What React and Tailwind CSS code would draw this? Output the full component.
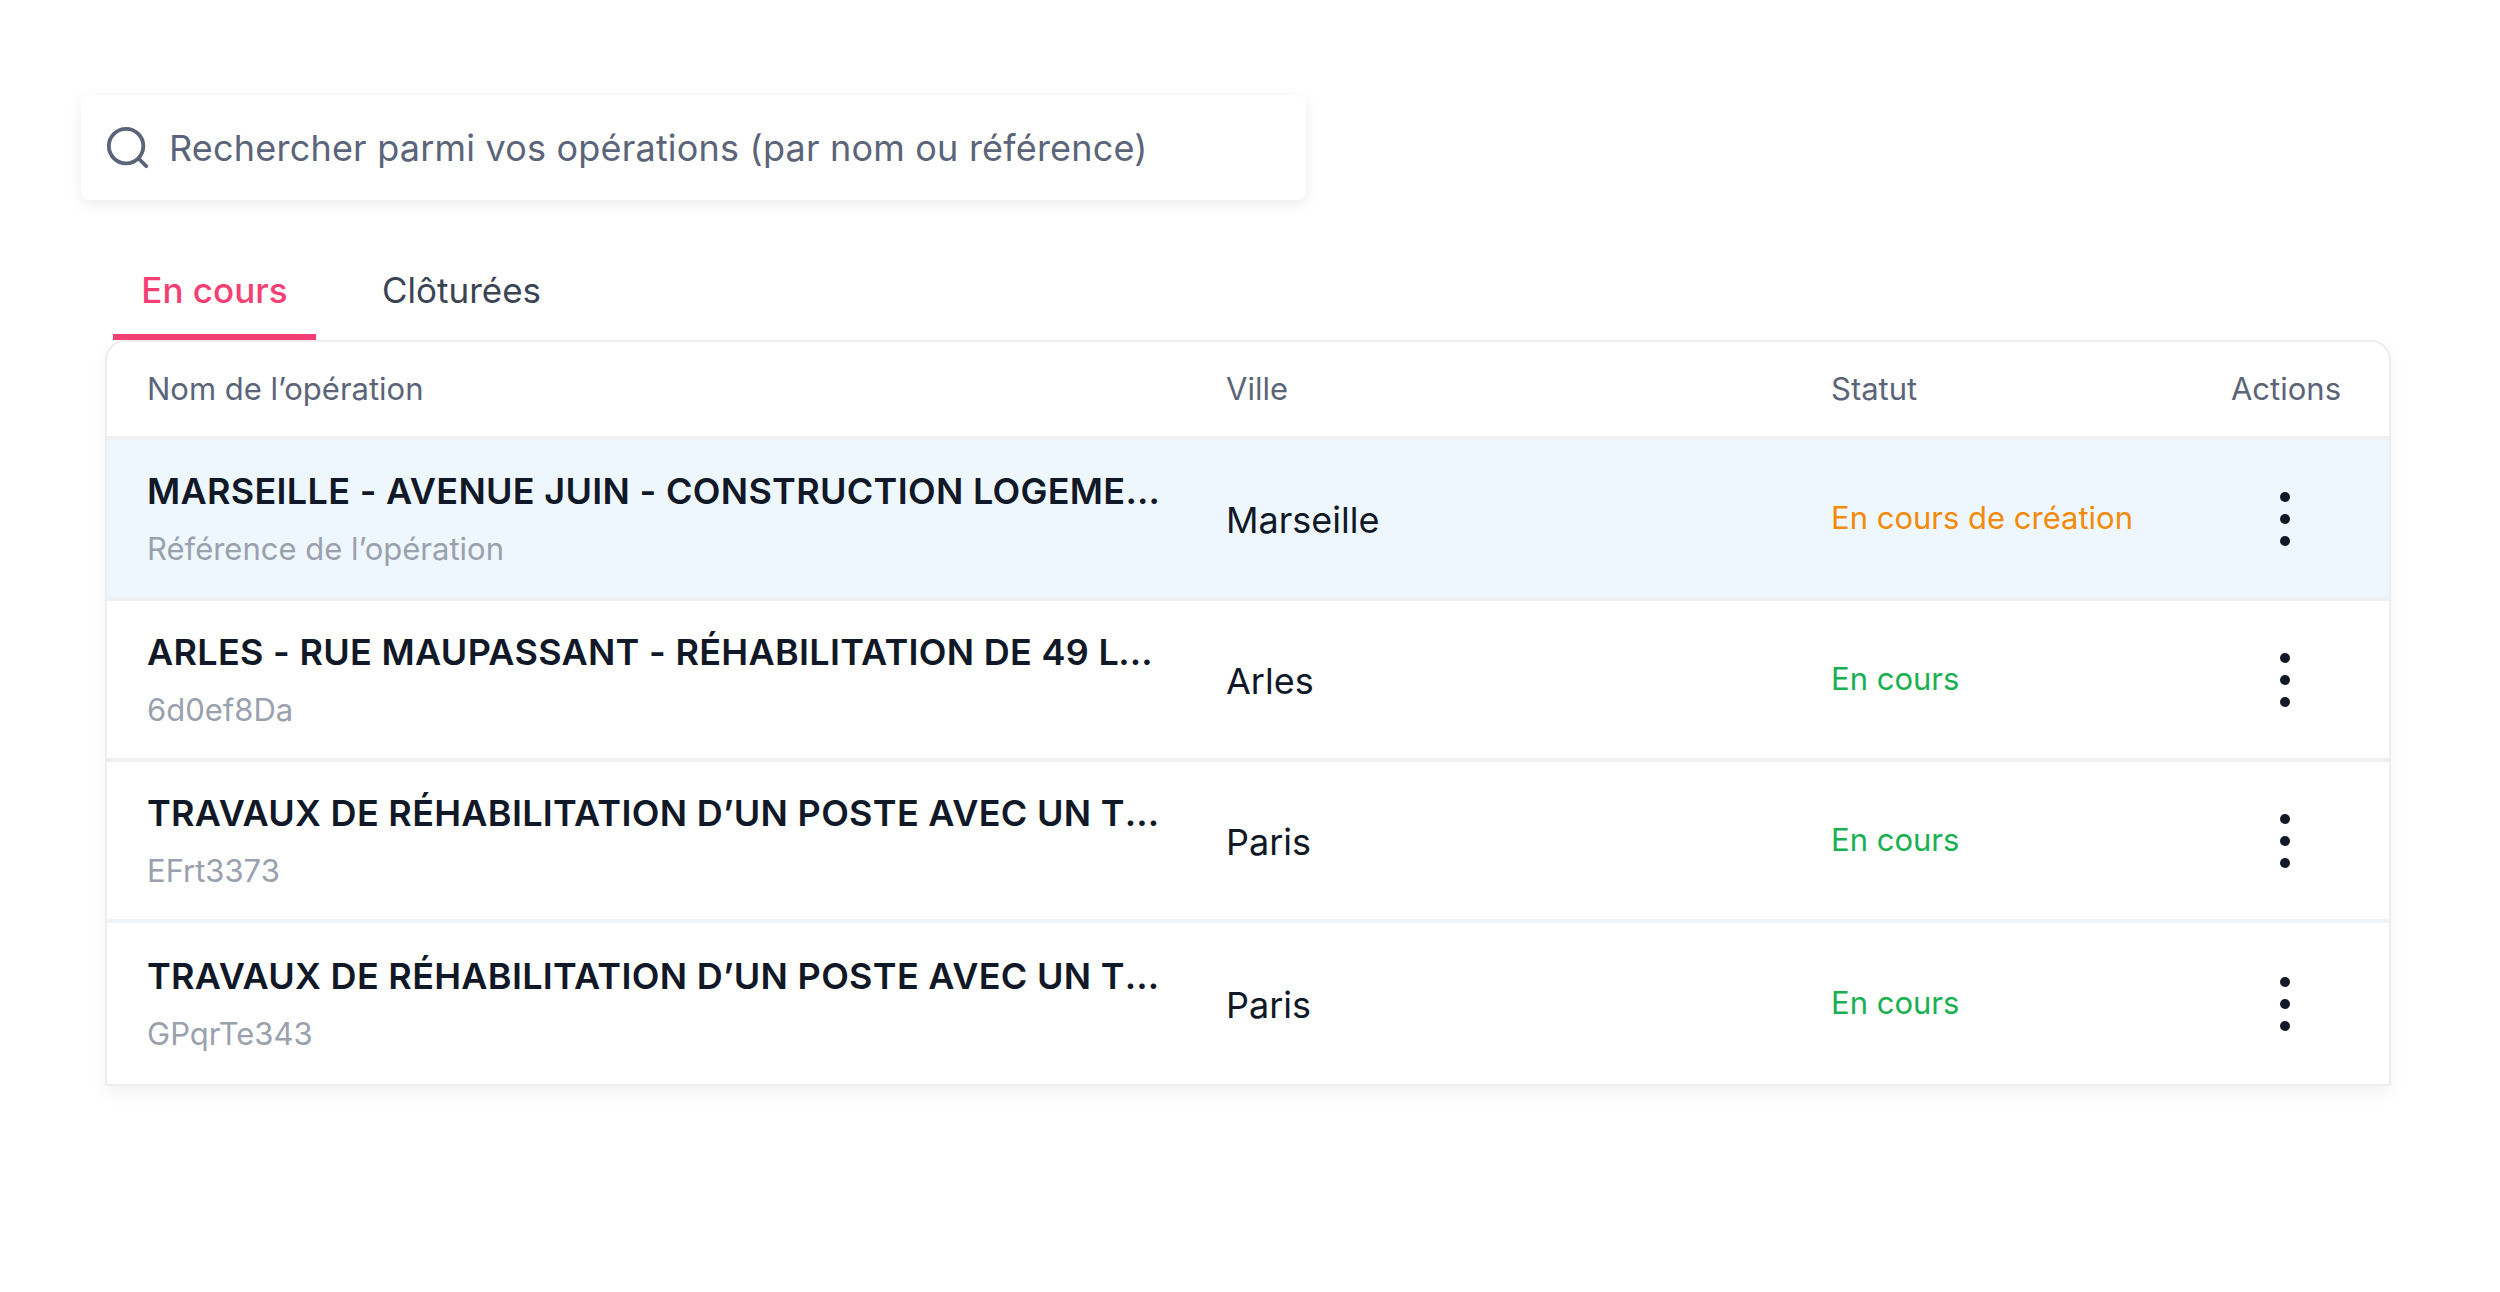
const rows = [
  { name: "MARSEILLE - AVENUE JUIN - CONSTRUCTION LOGEMENTS SOCIAUX", ref: "Référence de l’opération", city: "Marseille", status: "En cours de création", creating: true },
  { name: "ARLES - RUE MAUPASSANT - RÉHABILITATION DE 49 LOGEMENTS", ref: "6d0ef8Da", city: "Arles", status: "En cours" },
  { name: "TRAVAUX DE RÉHABILITATION D’UN POSTE AVEC UN TRANSFORMATEUR", ref: "EFrt3373", city: "Paris", status: "En cours" },
  { name: "TRAVAUX DE RÉHABILITATION D’UN POSTE AVEC UN TRANSFORMATEUR", ref: "GPqrTe343", city: "Paris", status: "En cours" },
];

function Dots() {
  return (
    <svg width="12" height="60" viewBox="0 0 12 60" className="text-[#111827]">
      <circle cx="6" cy="8" r="5" fill="currentColor" />
      <circle cx="6" cy="30" r="5" fill="currentColor" />
      <circle cx="6" cy="52" r="5" fill="currentColor" />
    </svg>
  );
}

export default function App() {
  return (
    <div className="min-h-screen bg-white pt-[95px] pl-[81px]" style={{ fontFamily: "Inter, 'Noto Sans', sans-serif" }}>
      <div className="w-[1225px] h-[105px] rounded-lg bg-white shadow-[0_4px_14px_rgba(0,0,0,0.08)] flex items-center pl-[24px] gap-[18px]">
        <svg width="46" height="46" viewBox="0 0 24 24" fill="none" stroke="#5b6478" strokeWidth="2" strokeLinecap="round">
          <circle cx="11" cy="11" r="9" />
          <path d="M18 18l3.5 3.5" />
        </svg>
        <span className="text-[36px] text-[#5b6478] tracking-[0.2px]">Rechercher parmi vos opérations (par nom ou référence)</span>
      </div>

      <div className="flex mt-[40px] ml-[32px]">
        <div className="w-[203px] h-[100px] flex items-center justify-center border-b-[6px] border-[#f43f75] text-[35px] font-medium text-[#f43f75] pt-[6px]">En cours</div>
        <div className="h-[100px] flex items-center px-[66px] text-[35px] text-[#3b4455]">Clôturées</div>
      </div>

      <div className="ml-[24px] w-[2286px] rounded-t-[20px] border-2 border-[#eceef2] bg-white shadow-[0_8px_16px_rgba(0,0,0,0.05)] overflow-hidden">
        <div className="grid grid-cols-[1079px_605px_1fr] h-[98px] items-center pl-[40px] pr-[48px] text-[31px] text-[#5b6478] border-b-4 border-[#eef0f4]">
          <div>Nom de l’opération</div>
          <div>Ville</div>
          <div className="flex justify-between"><span>Statut</span><span>Actions</span></div>
        </div>
        {rows.map((r, i) => (
          <div key={i} className={`grid grid-cols-[1079px_605px_1fr] h-[161px] items-center pl-[40px] pr-[48px] ${i < 3 ? "border-b-4" : ""} ${i === 2 ? "border-[#eef6fc]" : "border-[#eef0f4]"} ${r.creating ? "bg-[#eef7fd]" : "bg-white"}`}>
            <div className="pr-[60px] min-w-0">
              <div className="text-[36px] font-semibold text-[#111827] truncate tracking-[0.3px]">{r.name}</div>
              <div className="text-[31px] text-[#9aa1ae] mt-[8px]">{r.ref}</div>
            </div>
            <div className="text-[36px] text-[#111827] pt-[2px]">{r.city}</div>
            <div className="flex items-center justify-between pr-[50px]">
              <span className={`text-[31px] ${r.creating ? "text-[#f28a0c]" : "text-[#19b052]"}`}>{r.status}</span>
              <Dots />
            </div>
          </div>
        ))}
      </div>
    </div>
  );
}
